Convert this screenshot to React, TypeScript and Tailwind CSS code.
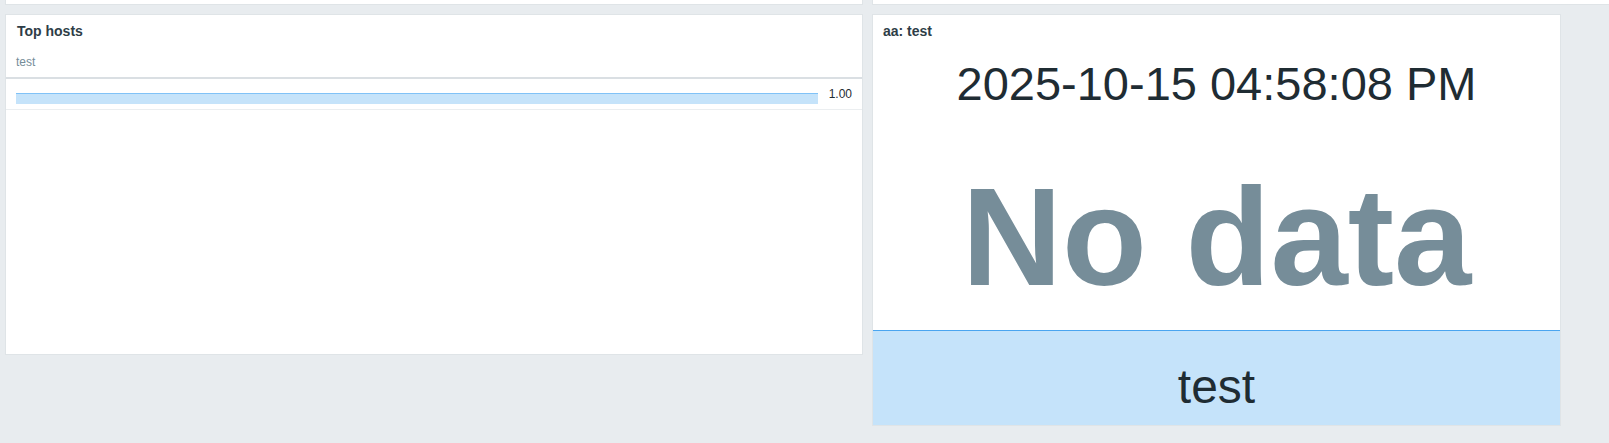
import React from "react";

export default function App() {
  return (
    <div className="w-[1609px] h-[443px] overflow-hidden bg-[#e8ecef] font-['Liberation_Sans',Arial,sans-serif] text-[#1f2c33]">
      {/* top row (cut off) */}
      <div className="flex gap-[9px] pl-[5px]">
        <div className="w-[858px] shrink-0 h-[5px] bg-white border-x border-b border-[#dfe4e7]" />
        <div className="w-[800px] shrink-0 h-[5px] bg-white border-l border-b border-[#dfe4e7]" />
      </div>

      {/* second row */}
      <div className="flex items-start gap-[9px] pl-[5px] mt-[9px]">
        {/* Top hosts */}
        <div className="w-[858px] shrink-0 h-[341px] bg-white border border-[#dfe4e7]">
          <div className="pt-[8px] pl-[11px] text-[14px] leading-4 font-bold text-[#2e3d47]">
            Top hosts
          </div>
          <div className="mt-[16px] pl-[10px] text-[12px] leading-[14px] text-[#768d99]">
            test
          </div>
          <div className="mt-[8px] border-b-2 border-[#dadfe3]" />
          <div className="flex items-center h-[31px] border-b border-[#ebeef0] pl-[10px] pr-[10px]">
            <div className="flex-1 h-[11px] mt-[9px] bg-[#c5e3fa] border-t border-[#80c2f7]" />
            <div className="ml-[11px] text-[12px] leading-[14px] text-[#1f2c33]">1.00</div>
          </div>
        </div>

        {/* aa: test */}
        <div className="w-[689px] shrink-0 h-[412px] bg-white border border-[#dfe4e7] flex flex-col">
          <div className="pt-[8px] pl-[10px] text-[14px] leading-4 font-bold text-[#2e3d47]">
            aa: test
          </div>
          <div className="mt-[21px] text-center text-[47px] leading-[47px] text-[#1f2c33]">
            2025-10-15 04:58:08 PM
          </div>
          <div className="mt-[60px] text-center text-[139px] leading-[139px] font-bold text-[#768d99]">
            No data
          </div>
          <div className="mt-auto h-[95px] bg-[#c5e3fa] border-t border-[#4aa5f0] pt-[32px] text-center text-[48px] leading-[48px] text-[#1f2c33]">
            test
          </div>
        </div>
      </div>
    </div>
  );
}
